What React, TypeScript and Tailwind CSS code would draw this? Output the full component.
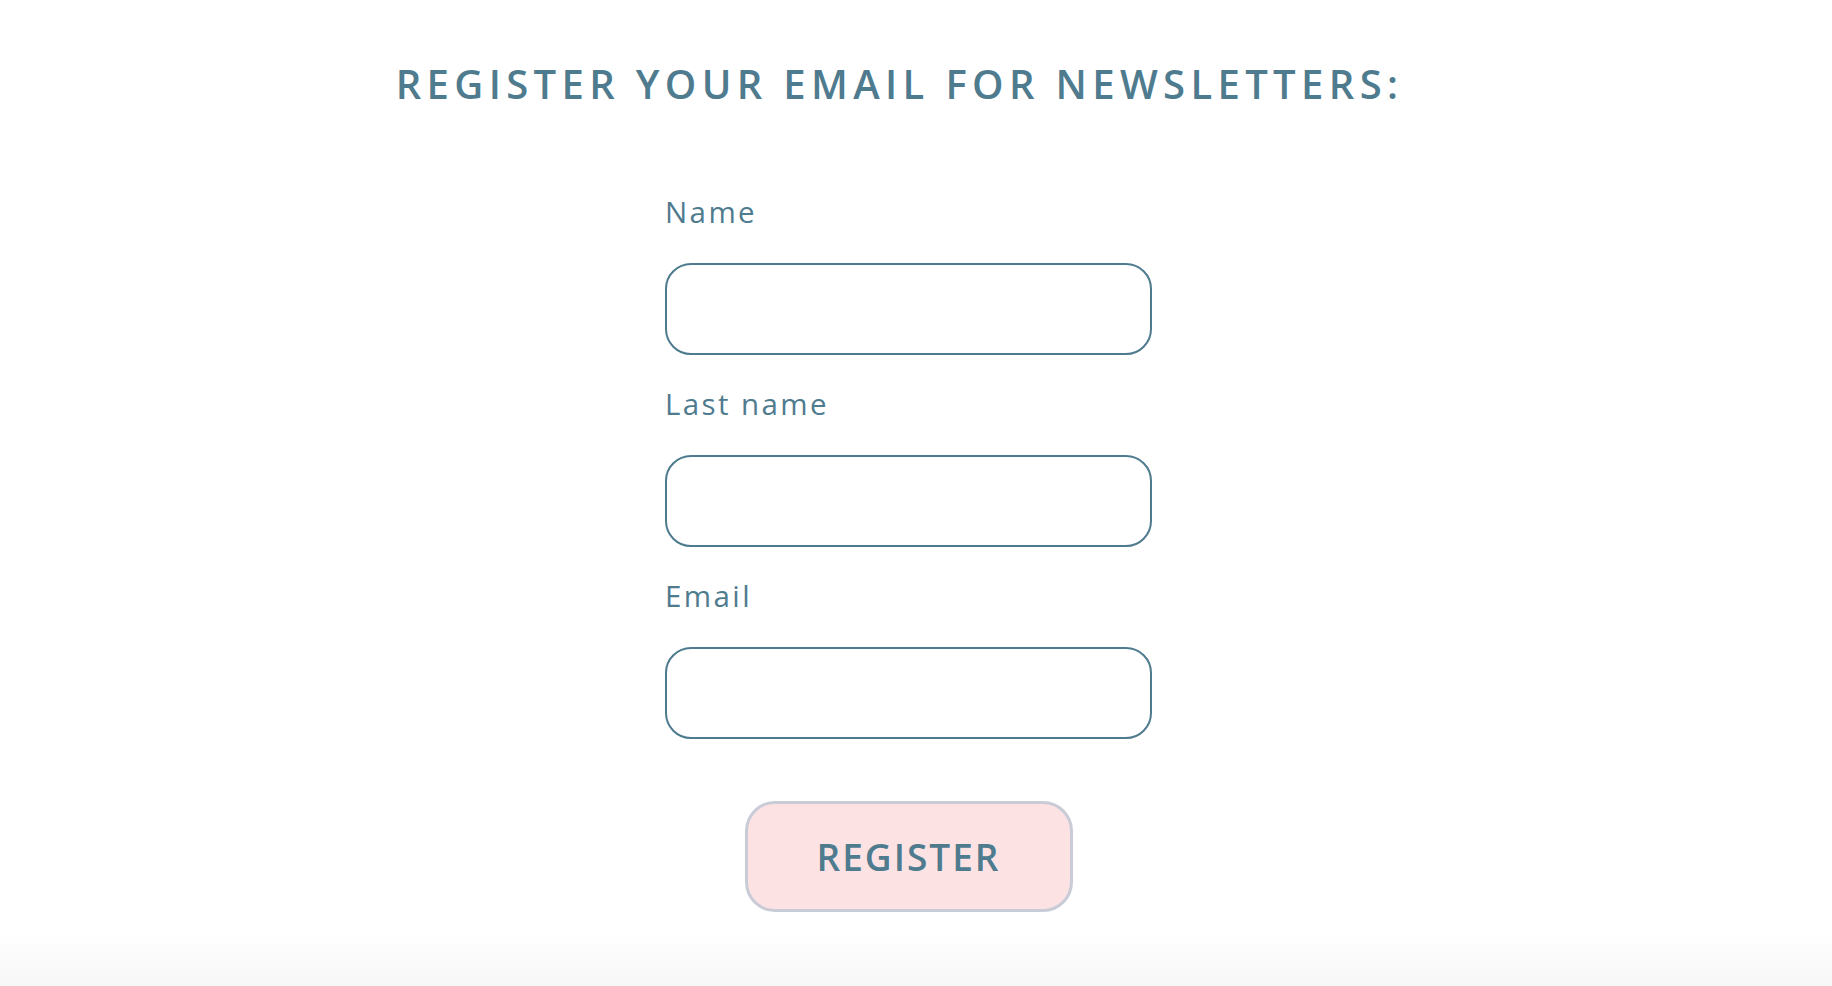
import React from "react";

const fields = ["Name", "Last name", "Email"];

export default function App() {
  return (
    <div className="min-h-[986px] w-full bg-white flex flex-col" style={{ fontFamily: '"Open Sans", sans-serif' }}>
      <div className="w-[1817px] flex flex-col items-center">
        <h1 className="pt-[60px] pr-[18px] text-[40px] leading-[48px] font-semibold tracking-[5.35px] text-[#4f7b8f]" style={{ fontFamily: '"Open Sans", sans-serif' }}>
          REGISTER YOUR EMAIL FOR NEWSLETTERS:
        </h1>
        <form className="mt-[88px] w-[487px] flex flex-col" onSubmit={(e) => e.preventDefault()}>
          {fields.map((f, i) => (
            <div key={f} className={i > 0 ? "mt-[33px] flex flex-col" : "flex flex-col"}>
              <label className="text-[29.5px] leading-[32px] text-[#4f7b8f] tracking-[2.4px]">{f}</label>
              <input
                type={f === "Email" ? "email" : "text"}
                className="mt-[35px] h-[92px] w-[487px] rounded-[26px] border-2 border-[#4f7b8f] bg-white px-6 text-[24px] text-[#4f7b8f] outline-none"
              />
            </div>
          ))}
          <div className="mt-[62px] flex justify-center">
            <button
              type="submit"
              className="h-[111px] w-[328px] rounded-[30px] border-[3px] border-[#c9ccd6] bg-[#fde2e4] text-[37px] font-semibold tracking-[2px] text-[#4f7b8f]"
            >
              REGISTER
            </button>
          </div>
        </form>
      </div>
      <div className="mt-auto h-[56px] bg-gradient-to-b from-white to-[#f7f7f7]" />
    </div>
  );
}
